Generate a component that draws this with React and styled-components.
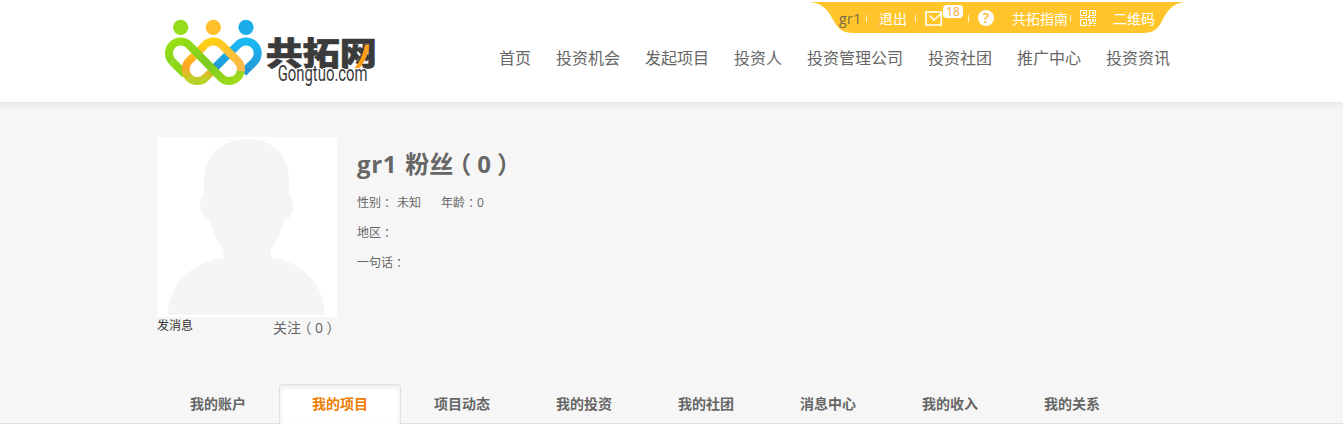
import React from "react";
import styled, { createGlobalStyle } from "styled-components";

const Global = createGlobalStyle`
  * { box-sizing: border-box; }
  body {
    margin: 0;
    background: #fff;
    color: #666;
    font: 12px/20px "Open Sans", "Noto Sans CJK SC", sans-serif;
    overflow: hidden;
  }
`;

const Header = styled.header`
  display: flex;
  height: 102px;
  padding-left: 157px;
  background: #fff;
`;

const Logo = styled.svg`
  flex: none;
  width: 233px;
  height: 90px;
  margin-top: 10px;
  overflow: visible;
`;

const HeaderRight = styled.div`
  width: 795px;
`;

const UserBar = styled.div`
  position: relative;
  isolation: isolate;
  display: flex;
  width: 375px;
  height: 31px;
  margin: 2px 0 0 420px;
  padding-left: 29px;
  color: #fff;
  font-size: 14px;
  line-height: 33px;
  white-space: nowrap;
`;

const BarShape = styled.svg`
  position: absolute;
  inset: 0;
  z-index: -1;
`;

const BarCell = styled.div`
  flex: none;
  position: relative;
  width: ${(p) => p.$w}px;
  padding: ${(p) => p.$top || 0}px 0 0 ${(p) => p.$left || 0}px;
  svg { display: block; }
`;

const UserName = styled(BarCell)`
  color: #776a49;
  letter-spacing: 0.5px;
`;

const Divider = styled.i`
  flex: none;
  width: 1px;
  height: 7px;
  margin-top: 13px;
  background: #fff3cf;
`;

const Badge = styled.span`
  position: absolute;
  left: 27px;
  top: 3px;
  width: 20px;
  height: 13px;
  border-radius: 4px;
  background: #fff;
  color: #f3a83c;
  font-size: 12px;
  line-height: 13px;
  text-align: center;
`;

const HelpDisc = styled.div`
  width: 16px;
  height: 16px;
  border-radius: 50%;
  background: #fff;
  color: #ffb92b;
  font-size: 14px;
  font-weight: 600;
  line-height: 16px;
  text-align: center;
`;

const Nav = styled.nav`
  display: flex;
  gap: 25px;
  margin: 13px 0 0 109px;
  font-size: 16px;
  line-height: 24px;
  white-space: nowrap;
`;

const Main = styled.main`
  height: 322px;
  padding-top: 35px;
  background: linear-gradient(#e7e7e7, #f1f1f1 4px, #f6f6f6 8px);
  border-bottom: 1px solid #e1e1e1;
`;

const Profile = styled.section`
  display: flex;
  gap: 20px;
  height: 247px;
  padding-left: 157px;
`;

const AvatarColumn = styled.div`
  width: 180px;
`;

const Avatar = styled.svg`
  display: block;
  background: #fff;
`;

const AvatarLinks = styled.div`
  display: flex;
  justify-content: space-between;
  padding-top: 1px;
  line-height: 16px;
`;

const Message = styled.span`
  color: #333;
`;

const Follow = styled.span`
  width: 64px;
  padding-top: 2px;
  font-size: 14px;
  white-space: nowrap;
`;

const Info = styled.div`
  padding-top: 9px;
`;

const Name = styled.h1`
  margin: 0 0 11px;
  font-size: 24px;
  line-height: 36px;
  font-weight: 700;
`;

const Nick = styled.span`
  margin-right: 2px;
  letter-spacing: 0.6px;
`;

const Row = styled.p`
  display: flex;
  height: 20px;
  margin: 0 0 10px;
`;

const Field = styled.span`
  margin-right: ${(p) => p.$gap || 0}px;
`;

const Colon = styled.span`
  position: relative;
  top: 1px;
  font-family: "Noto Sans CJK JP", sans-serif;
  line-height: 0;
`;

/* Half-width bracket glyph centred in a full em. */
const Paren = styled.span`
  margin: 0 0.25em;
  font-family: "Noto Sans CJK SC", sans-serif;
  font-feature-settings: "halt";
  line-height: 0;
`;

const Tabs = styled.div`
  display: flex;
  height: 40px;
  padding-left: 157px;
`;

const Tab = styled.div`
  width: 122px;
  height: 40px;
  border: 1px solid ${(p) => (p.$active ? "#dfdfdf" : "transparent")};
  border-bottom: 0;
  border-radius: 4px 4px 0 0;
  background: ${(p) => (p.$active ? "#fff" : "none")};
  box-shadow: ${(p) => (p.$active ? "inset 0 2px 5px #eaeaea" : "none")};
  color: ${(p) => (p.$active ? "#ee7c00" : "#666")};
  font-size: 14px;
  font-weight: 700;
  line-height: 38px;
  text-align: center;
`;

const navItems = ["首页", "投资机会", "发起项目", "投资人", "投资管理公司", "投资社团", "推广中心", "投资资讯"];
const tabs = ["我的账户", "我的项目", "项目动态", "我的投资", "我的社团", "消息中心", "我的收入", "我的关系"];

function Brand() {
  return (
    <Logo viewBox="21 0 699 270">
      <defs>
        <linearGradient id="green" x1="0" y1="0" x2="1" y2="1">
          <stop offset="0" stopColor="#9be016" />
          <stop offset=".55" stopColor="#7acb22" />
          <stop offset="1" stopColor="#a0dc1a" />
        </linearGradient>
        <linearGradient id="gold" x1="0" y1="0" x2="0" y2="1">
          <stop offset="0" stopColor="#ffd011" />
          <stop offset=".6" stopColor="#ffa526" />
          <stop offset="1" stopColor="#b6d427" />
        </linearGradient>
        <linearGradient id="amber" x1="0" y1="0" x2="1" y2="1">
          <stop offset="0" stopColor="#ffd011" />
          <stop offset="1" stopColor="#fbb750" />
        </linearGradient>
        <linearGradient id="blue" x1="0" y1="0" x2="0" y2="1">
          <stop offset="0" stopColor="#1bb8f4" />
          <stop offset="1" stopColor="#2296d4" />
        </linearGradient>
      </defs>
      <circle cx="92" cy="52" r="23" fill="#97dc1b" />
      <circle cx="190" cy="52" r="23" fill="#ffc029" />
      <circle cx="288" cy="52" r="23" fill="#1badea" />
      <g fill="none" strokeWidth="24">
        <path d="M195 173L263 105A35 35 0 0 1 313 155L280 188" stroke="url(#blue)" />
        <path d="M67 155L106 194" stroke="#8cd819" />
        <path d="M165 105L117 153A35 35 0 0 0 167 203L190 180" stroke="url(#gold)" />
        <path d="M165 105A35 35 0 0 1 215 105L263 153Q277 169 272 186" stroke="url(#amber)" />
        <path d="M67 155A35 35 0 0 1 117 105L213 203A35 35 0 0 0 272 183" stroke="url(#green)" />
      </g>
      <text x="347" y="165" fontFamily="Noto Sans CJK SC" fontWeight="900" fontSize="97" textLength="333" lengthAdjust="spacingAndGlyphs" fill="#3b3b3b" stroke="#3b3b3b" strokeWidth="2">共拓网</text>
      <path d="M645 104H658Q655 143 628 175H613Q638 145 645 104Z" fill="#ff9f19" />
      <text x="383" y="214" fontFamily="Roboto" fontSize="64" textLength="270" lengthAdjust="spacingAndGlyphs" fill="#3b3b3b" stroke="#fff" strokeWidth="6" paintOrder="stroke">Gongtuo.com</text>
    </Logo>
  );
}

function QrIcon() {
  return (
    <svg width="16" height="16" viewBox="0 0 16 16" fill="#fff" shapeRendering="crispEdges">
      <path fillRule="evenodd" d="M0 0h7v6H0zM1 1v4h5V1zM9 0h7v6H9zM10 1v4h5V1zM0 9h7v7H0zM1 10v5h5v-5z" />
      <path d="M3 2h2v2H3zM12 2h2v2h-2zM3 12h2v2H3zM0 7h3v1H0zM5 7h2v1H5zM8 6h2v2H8zM12 7h4v1h-4zM8 9h3v2H8zM12 9h2v3h-2zM15 9h1v3h-1zM9 12h3v2H9zM13 13h3v1h-3zM8 15h3v1H8zM13 15h2v1h-2z" />
    </svg>
  );
}

export default function App() {
  return (
    <>
      <Global />
      <Header>
        <Brand />
        <HeaderRight>
          <UserBar>
            <BarShape width="375" height="31" viewBox="0 0 375 31">
              <path d="M0 0H375C363 1 358 8 353 17C348 27 344 31 333 31H44C32 31 28 27 22 16C18 8 12 1 0 0Z" fill="#ffc52b" />
            </BarShape>
            <UserName $w={27}>gr1</UserName>
            <Divider />
            <BarCell $w={48} $left={12}>退出</BarCell>
            <Divider />
            <BarCell $w={52}>
              <svg width="52" height="31" viewBox="0 0 52 31" fill="none" stroke="#fff" strokeWidth="1.6">
                <path d="M10 10H25.3V23H10ZM13.5 13.5L18 18L26 11" />
              </svg>
              <Badge>18</Badge>
            </BarCell>
            <Divider />
            <BarCell $w={43} $left={9} $top={8}><HelpDisc>?</HelpDisc></BarCell>
            <BarCell $w={58}>共拓指南</BarCell>
            <Divider />
            <BarCell $w={42} $left={9} $top={8}><QrIcon /></BarCell>
            <BarCell $w={42}>二维码</BarCell>
          </UserBar>
          <Nav>{navItems.map((n) => <span key={n}>{n}</span>)}</Nav>
        </HeaderRight>
      </Header>
      <Main>
        <Profile>
          <AvatarColumn>
            <Avatar width="180" height="180" viewBox="0 0 180 180">
              <path fill="#f5f5f5" d="M47 57V43C47 18 65 2 90 2S132 18 132 43V57C138 63 138 76 131 82L127 83C124 97 120 104 114 112V121C146 124 168 149 168 178H11C11 149 34 124 67 121L66 112C60 104 56 97 53 83L50 82C42 76 41 63 47 57Z" />
            </Avatar>
            <AvatarLinks>
              <Message>发消息</Message>
              <Follow>关注<Paren>（</Paren>0<Paren>）</Paren></Follow>
            </AvatarLinks>
          </AvatarColumn>
          <Info>
            <Name><Nick>gr1</Nick> 粉丝<Paren>（</Paren>0<Paren>）</Paren></Name>
            <Row>
              <Field $gap={4}>性别<Colon>：</Colon></Field>
              <Field $gap={20}>未知</Field>
              <Field>年龄<Colon>：</Colon>0</Field>
            </Row>
            <Row><Field>地区<Colon>：</Colon></Field></Row>
            <Row><Field>一句话<Colon>：</Colon></Field></Row>
          </Info>
        </Profile>
        <Tabs>{tabs.map((t, i) => <Tab key={t} $active={i === 1}>{t}</Tab>)}</Tabs>
      </Main>
    </>
  );
}
